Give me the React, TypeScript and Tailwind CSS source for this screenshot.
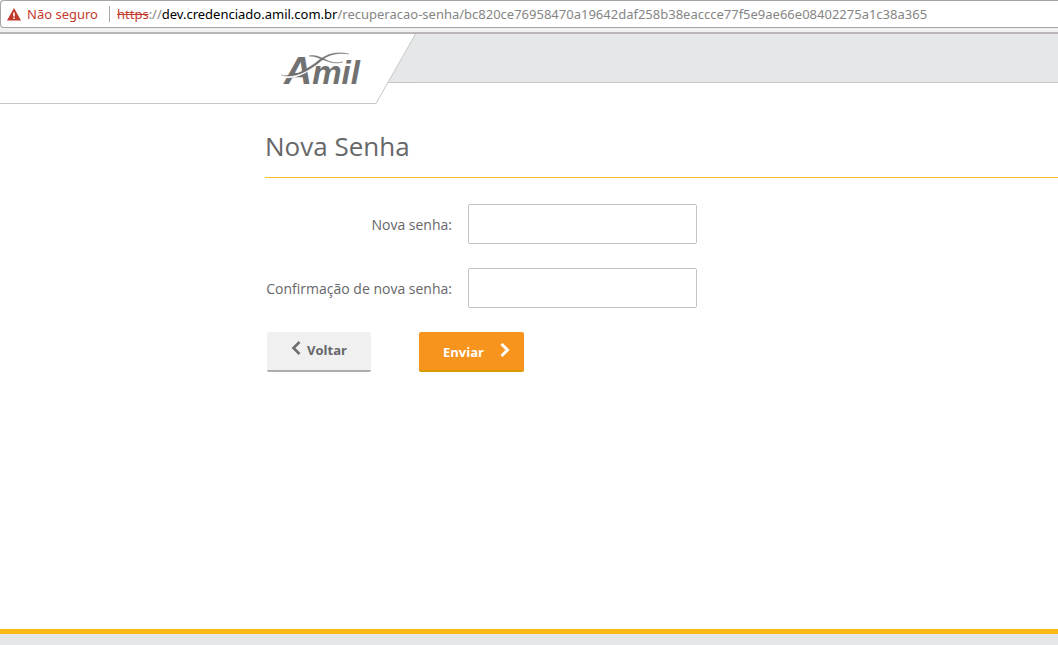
import { useState } from 'react';

function AddressBar() {
  return (
    <div className="border-b-2 border-[#b9b5b9] bg-[#f1f1f1] pb-1">
      <div className="flex h-7 items-center whitespace-nowrap rounded-l-sm border-y border-l border-[#a5a5a5] bg-white pl-[6px] font-['Noto_Sans','Open_Sans',sans-serif] text-[13px] leading-5">
        <svg width="14" height="13" viewBox="0 0 14 13" aria-hidden="true">
          <path d="M7 0L14 12.5H0Z" fill="#c0392b" />
          <path d="M6.2 4.4h1.6v4H6.2zM6.2 9.4h1.6v1.6H6.2z" fill="#fff" />
        </svg>
        <span className="ml-[6px] text-[#c33b2e]">Não seguro</span>
        <span className="ml-[11px] mr-[7px] h-4 w-px bg-[#a9a9a9]" />
        <span className="text-[#858585]">
          <span className="text-[#c33b2e] line-through">https</span>://
          <span className="text-black">dev.credenciado.amil.com.br</span>
          /recuperacao-senha/bc820ce76958470a19642daf258b38eaccce77f5e9ae66e08402275a1c38a365
        </span>
      </div>
    </div>
  );
}

function Logo() {
  return (
    <svg width="84" height="48" viewBox="0 0 84 48" role="img" aria-label="Amil">
      <text
        x="4"
        y="38"
        fill="#717171"
        fontFamily="Liberation Sans, Arial, sans-serif"
        fontWeight="700"
        fontStyle="italic"
      >
        <tspan fontSize="39">A</tspan>
        <tspan fontSize="33">mil</tspan>
      </text>
      <path d="M1 30C14 34 29 25 40 15C48 8 58 5 69 8" fill="none" stroke="#fff" strokeWidth="2" />
      <path d="M29 10C42 7 47 20 63 16" fill="none" stroke="#fff" strokeWidth="2" />
      <path d="M1 29C13 32 28 23 39 14C48 7 58 5 69 8C58 6.500 49 8 41 15C28 26 13 33 1 29Z" fill="#717171" stroke="#717171" strokeWidth="0.3" />
      <path d="M29 10C42 7 47 20 63 16C49 20 41 10 29 10Z" fill="#717171" stroke="#717171" strokeWidth="0.4" />
    </svg>
  );
}

function Header() {
  return (
    <header className="flex items-start">
      <div className="flex h-[70px] w-[376px] shrink-0 justify-end border-b border-[#c8c8c5] bg-white pr-3 pt-3">
        <a href="#inicio" className="block h-12">
          <Logo />
        </a>
      </div>
      <svg width="40" height="70" viewBox="0 0 40 70" className="shrink-0" aria-hidden="true">
        <path d="M39.5 0H40V49H12.2Z" fill="#e6e7e9" />
        <path d="M0 69.5L39.5 0M12.2 48.5H40" fill="none" stroke="#c4c4c2" />
      </svg>
      <div className="h-[49px] flex-1 border-b border-[#c8c8c5] bg-[#e6e7e9]" />
    </header>
  );
}

function Field({ id, label }: { id: string; label: string }) {
  const [value, setValue] = useState('');
  return (
    <div className="flex items-center gap-4">
      <label htmlFor={id} className="w-[187px] whitespace-nowrap pt-[2px] text-right text-[14px] font-medium leading-5">
        {label}
      </label>
      <input
        id={id}
        type="password"
        value={value}
        onChange={(e) => setValue(e.target.value)}
        className="h-10 w-[229px] rounded-xs border border-[#c3c3c3] bg-white px-3 outline-none focus:border-[#f7941e]"
      />
    </div>
  );
}

export default function App() {
  return (
    <div className="flex min-h-screen flex-col overflow-x-hidden bg-white font-['Open_Sans','Noto_Sans',sans-serif] text-[#666769]">
      <AddressBar />
      <Header />
      <main className="flex-1 pl-[265px] pt-[22px]">
        <h1 className="border-b border-[#f5bd25] pb-[11px] text-[26px] leading-10">Nova Senha</h1>
        <form className="mt-[26px] flex flex-col gap-6" onSubmit={(e) => e.preventDefault()}>
          <Field id="nova-senha" label="Nova senha:" />
          <Field id="confirmacao" label="Confirmação de nova senha:" />
          <div className="flex gap-12 pl-[2px] text-[13px] font-bold leading-5">
            <button
              type="button"
              className="flex h-10 w-[104px] items-center justify-center gap-[6px] rounded-xs border-b-2 border-[#adadad] bg-[#f0f0f0] pb-[2px]"
            >
              <svg width="10" height="14" viewBox="0 0 10 14" className="mb-1" aria-hidden="true">
                <path d="M8.5 1L2.5 7L8.5 13" fill="none" stroke="#6d6e70" strokeWidth="2.6" />
              </svg>
              Voltar
            </button>
            <button
              type="submit"
              className="flex h-10 w-[105px] items-center justify-between rounded-xs border-b-2 border-[#d79a00] bg-[#f7941e] pl-6 pr-[14px] pt-[2px] text-white"
            >
              Enviar
              <svg width="10" height="14" viewBox="0 0 10 14" className="mb-1" aria-hidden="true">
                <path d="M1.5 1L7.5 7L1.5 13" fill="none" stroke="#fff" strokeWidth="3" />
              </svg>
            </button>
          </div>
        </form>
      </main>
      <footer className="h-4 border-t-[5px] border-[#fdb913] bg-[#e6e7e9]" />
    </div>
  );
}
